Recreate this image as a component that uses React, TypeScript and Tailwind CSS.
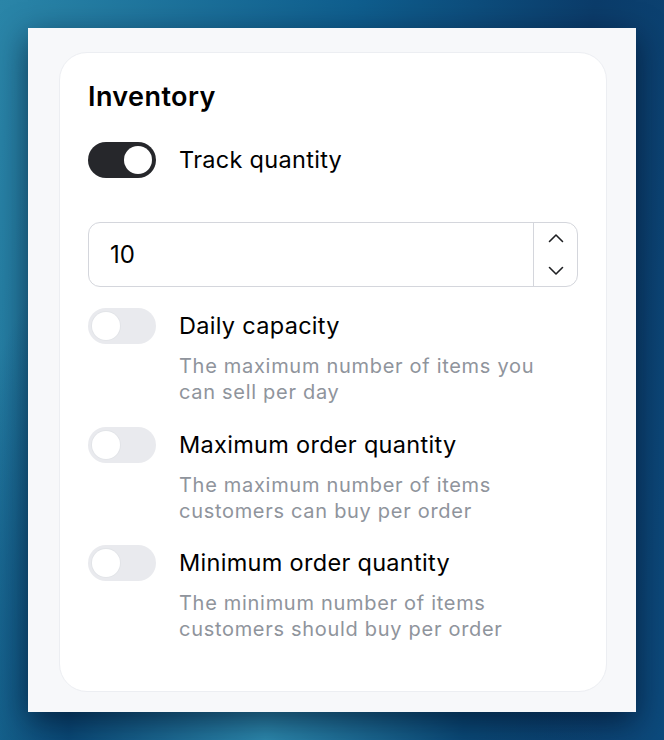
import { useState } from 'react';

type ToggleProps = { on: boolean; onChange: () => void };

function Toggle({ on, onChange }: ToggleProps) {
  return (
    <button
      type="button"
      onClick={onChange}
      className={`relative shrink-0 w-[68px] h-9 rounded-full transition-colors ${
        on ? 'bg-[#26272b]' : 'bg-[#e9eaee]'
      }`}
    >
      <span
        className={`absolute top-1 w-7 h-7 rounded-full bg-white transition-all ${
          on ? 'left-[36px]' : 'left-1 shadow-[0_0_0_1px_#e2e4e8]'
        }`}
      />
    </button>
  );
}

const limits = [
  { label: 'Daily capacity', desc: 'The maximum number of items you can sell per day' },
  { label: 'Maximum order quantity', desc: 'The maximum number of items customers can buy per order' },
  { label: 'Minimum order quantity', desc: 'The minimum number of items customers should buy per order' },
];

export default function App() {
  const [track, setTrack] = useState(true);
  const [qty, setQty] = useState(10);
  const [enabled, setEnabled] = useState([false, false, false]);

  return (
    <div
      className="min-h-screen w-full pt-7 px-7 pb-7 bg-[radial-gradient(ellipse_at_40%_100%,#2d8bb0_0%,#0a4a78_35%,transparent_60%),linear-gradient(100deg,#2a85a8_0%,#0f5e8e_45%,#0b3c6a_75%,#0c4a7c_100%)]"
      style={{ fontFamily: 'Inter, "Noto Sans", sans-serif' }}
    >
      <div className="w-[608px] h-[684px] bg-[#f7f8fa] pt-6 pl-[31px] pr-[29px] shadow-[0_10px_30px_rgba(0,10,30,0.6)]">
        <div className="h-[640px] bg-white rounded-[28px] border border-[#eceef2] pt-7 px-[28px]">
          <h2 className="text-[27px] leading-8 font-semibold tracking-[0.4px] text-black">Inventory</h2>

          <div className="flex items-center gap-[23px] mt-[29px]">
            <Toggle on={track} onChange={() => setTrack(!track)} />
            <span className="text-[23.5px] leading-9 tracking-[0.3px] text-black">Track quantity</span>
          </div>

          <div className="mt-[44px] h-[65px] flex rounded-xl border border-[#d4d6dc]">
            <input
              value={qty}
              onChange={(e) => setQty(Number(e.target.value) || 0)}
              className="flex-1 min-w-0 pl-[21px] text-[24px] text-black bg-transparent outline-none"
            />
            <div className="w-[44px] border-l border-[#d4d6dc] flex flex-col items-center justify-center gap-[23px]">
              <button type="button" onClick={() => setQty(qty + 1)}>
                <svg width="16" height="10" viewBox="0 0 16 10" fill="none" stroke="#1f2023" strokeWidth="1.6" strokeLinecap="round" strokeLinejoin="round">
                  <path d="M1.5 8.5 8 2l6.5 6.5" />
                </svg>
              </button>
              <button type="button" onClick={() => setQty(Math.max(0, qty - 1))}>
                <svg width="16" height="10" viewBox="0 0 16 10" fill="none" stroke="#1f2023" strokeWidth="1.6" strokeLinecap="round" strokeLinejoin="round">
                  <path d="M1.5 1.5 8 8l6.5-6.5" />
                </svg>
              </button>
            </div>
          </div>

          <div className="mt-[21px] flex flex-col gap-[21.5px]">
            {limits.map((item, i) => (
              <div key={item.label} className="flex gap-[23px]">
                <Toggle
                  on={enabled[i]}
                  onChange={() => setEnabled(enabled.map((v, j) => (j === i ? !v : v)))}
                />
                <div className="flex-1">
                  <div className="text-[23.5px] leading-9 tracking-[0.3px] text-black">{item.label}</div>
                  <p className="mt-[9px] text-[20px] leading-[26px] tracking-[0.7px] text-[#8f949c] max-w-[380px]">{item.desc}</p>
                </div>
              </div>
            ))}
          </div>
        </div>
      </div>
    </div>
  );
}
